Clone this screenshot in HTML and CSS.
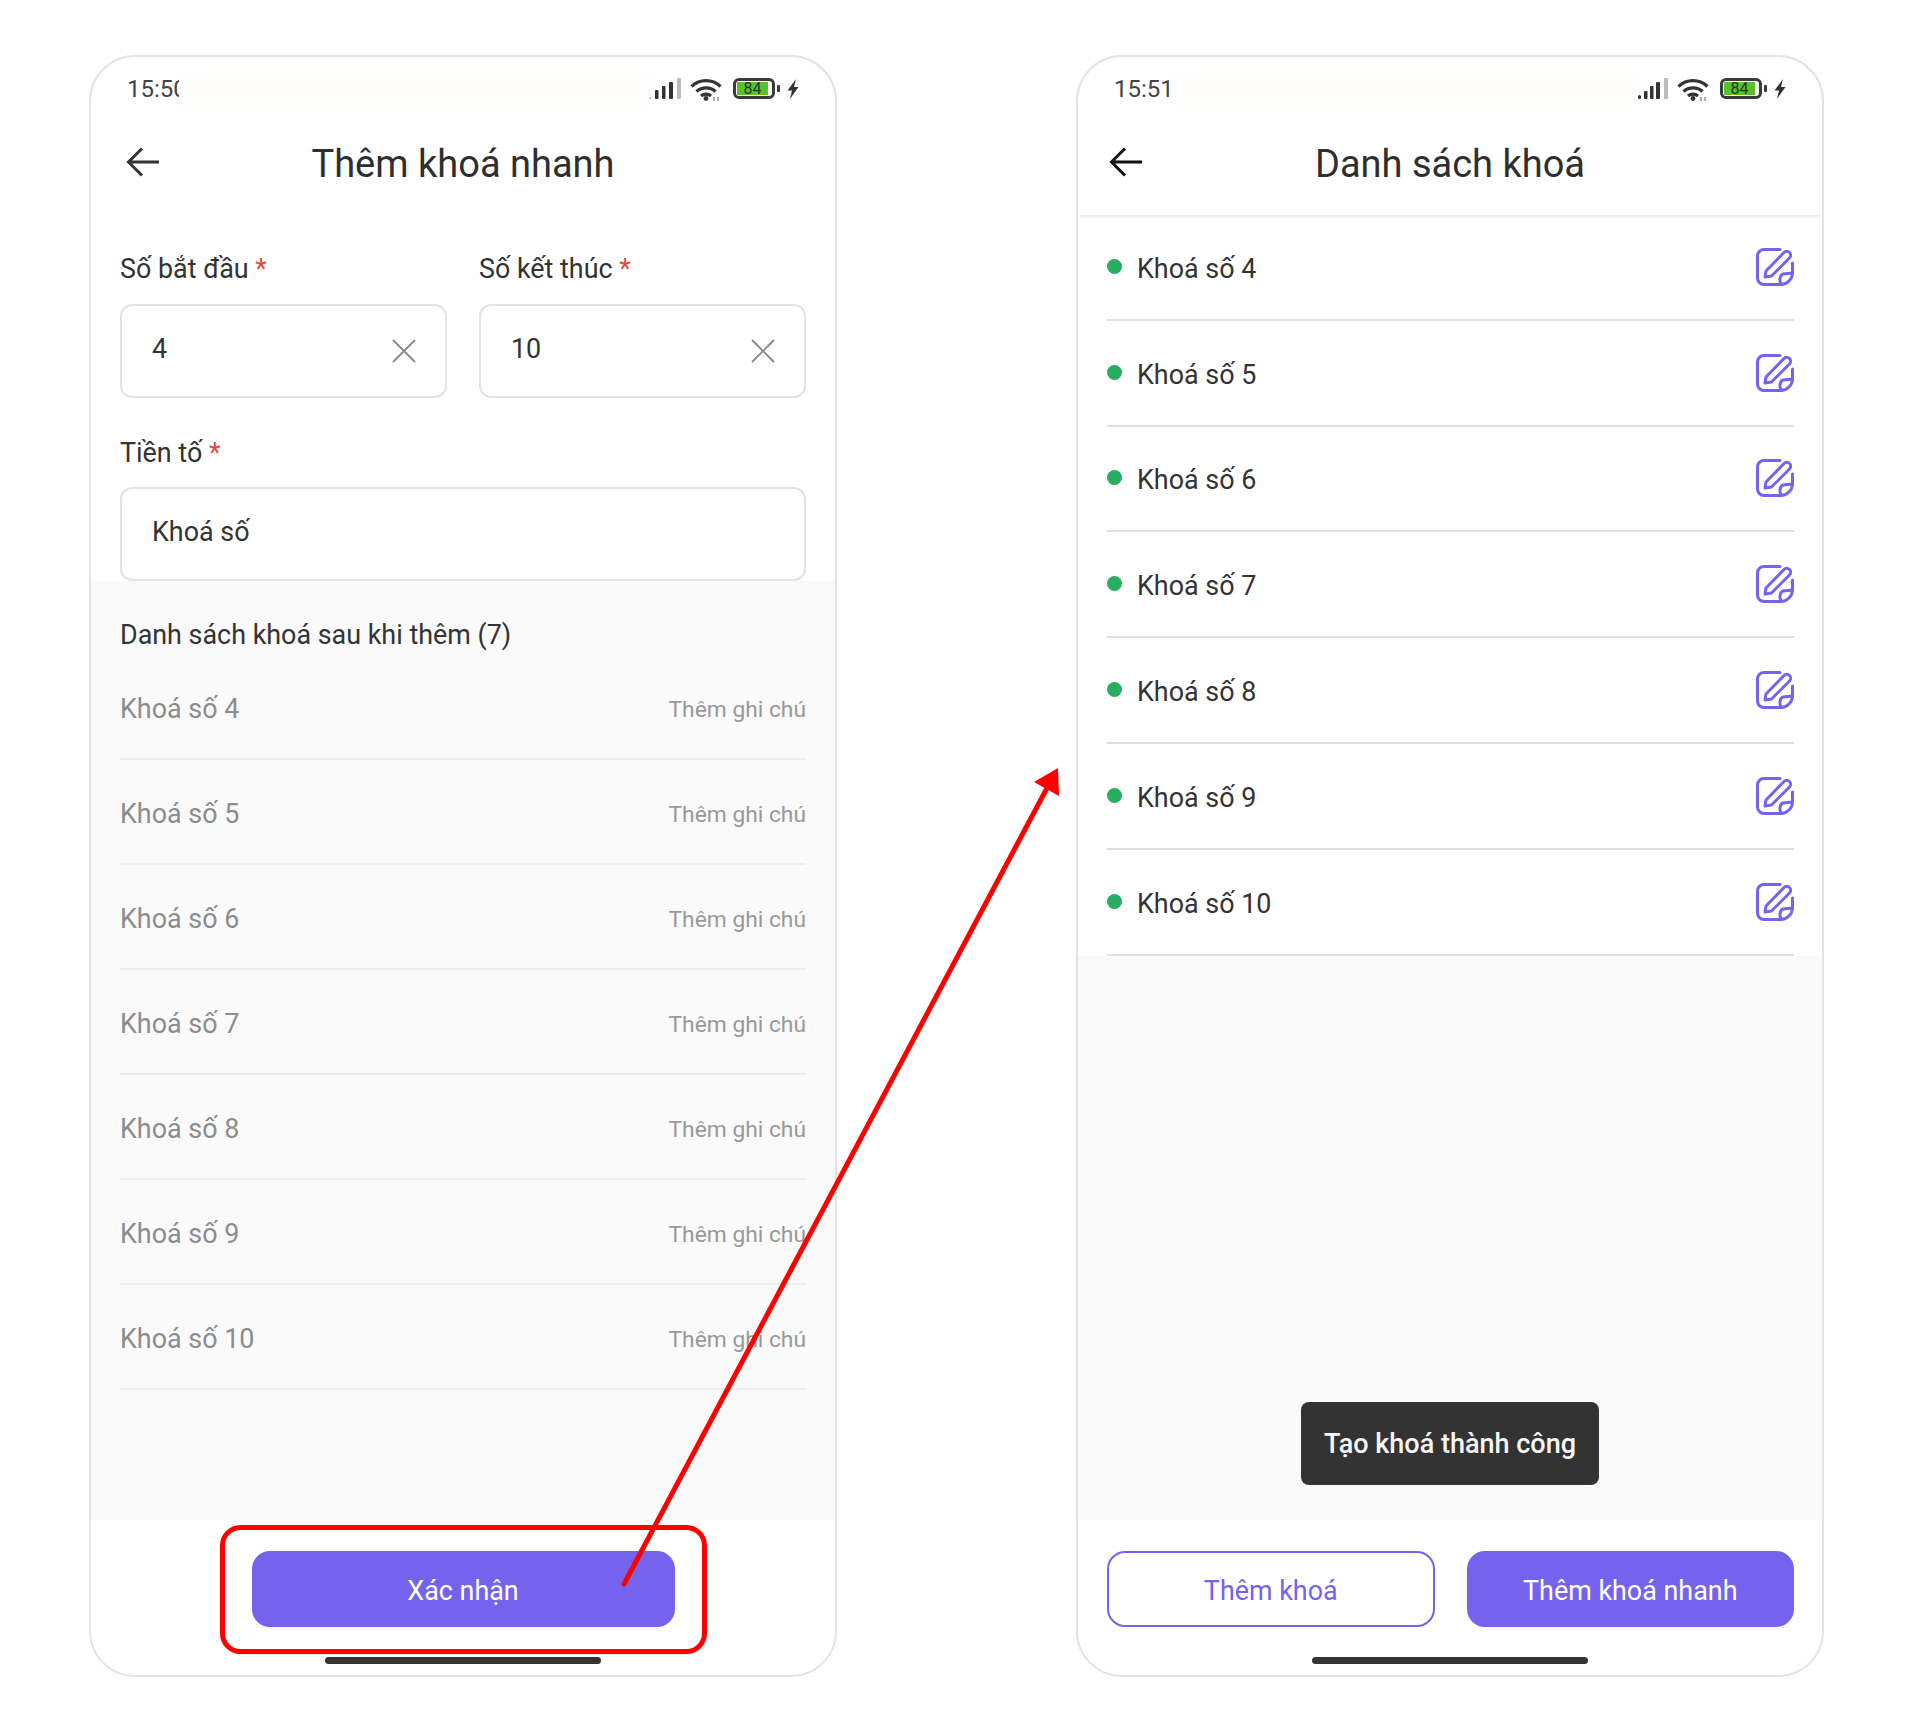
FILE: index.html
```html
<!DOCTYPE html>
<html lang="vi">
<head>
<meta charset="utf-8">
<title>Thêm khoá nhanh</title>
<link rel="stylesheet" href="styles.css">
</head>
<body>
<main class="page">
  <section class="phone">
    <div class="status">
      <span class="time">15:50</span>
      <span class="status-mask status-mask-a"></span>
      <div class="status-icons">
        <svg class="signal" viewBox="0 0 32 21"><rect x="0" y="19.5" width="2" height="1.5" fill="#bbb"/><rect x="6" y="12" width="3.5" height="9" rx="1" fill="#333"/><rect x="13" y="8" width="3.5" height="13" rx="1" fill="#333"/><rect x="20" y="4" width="4" height="17" rx="1" fill="#333"/><rect x="28" y="0" width="4" height="21" rx="1" fill="#bbb"/></svg>
        <svg class="wifi" viewBox="0 0 32 24" fill="none" stroke="#333" stroke-width="3.2"><path d="M1.5 9.5A21 21 0 0 1 30.5 9.5"/><path d="M6.5 14.5A14 14 0 0 1 25.5 14.5"/><path d="M11 19A7.5 7.5 0 0 1 21 19"/><circle cx="16" cy="21.5" r="2.4" fill="#333" stroke="none"/><path d="M24 20v4M28 20v4" stroke="#999" stroke-width="1.6"/></svg>
        <div class="battery"><span class="battery-level">84</span></div>
        <span class="battery-nub"></span>
        <svg class="bolt" viewBox="0 0 12 20"><path d="M9 0 0.5 11.5H5L3 20 11.5 8H7Z" fill="#333"/></svg>
      </div>
    </div>
    <header class="topbar">
      <svg class="back" viewBox="0 0 33 30" fill="none" stroke="#333" stroke-width="3"><path d="M33 15H3M16 1.5 2.5 15 16 28.5"/></svg>
      <h1 class="title">Thêm khoá nhanh</h1>
    </header>
    <form class="form">
      <div class="form-row">
        <div class="field">
          <div class="label">Số bắt đầu <span class="star">*</span></div>
          <div class="input"><span class="value">4</span><svg class="clear" viewBox="0 0 24 24" fill="none" stroke="#888" stroke-width="1.8"><path d="M1 1 23 23M23 1 1 23"/></svg></div>
        </div>
        <div class="field">
          <div class="label">Số kết thúc <span class="star">*</span></div>
          <div class="input"><span class="value">10</span><svg class="clear" viewBox="0 0 24 24" fill="none" stroke="#888" stroke-width="1.8"><path d="M1 1 23 23M23 1 1 23"/></svg></div>
        </div>
      </div>
      <div class="field field-wide">
        <div class="label">Tiền tố <span class="star">*</span></div>
        <div class="input"><span class="value">Khoá số</span></div>
      </div>
    </form>
    <div class="preview">
      <div class="preview-heading">Danh sách khoá sau khi thêm (7)</div>
      <div class="preview-row"><span>Khoá số 4</span><span class="note">Thêm ghi chú</span></div>
      <div class="preview-row"><span>Khoá số 5</span><span class="note">Thêm ghi chú</span></div>
      <div class="preview-row"><span>Khoá số 6</span><span class="note">Thêm ghi chú</span></div>
      <div class="preview-row"><span>Khoá số 7</span><span class="note">Thêm ghi chú</span></div>
      <div class="preview-row"><span>Khoá số 8</span><span class="note">Thêm ghi chú</span></div>
      <div class="preview-row"><span>Khoá số 9</span><span class="note">Thêm ghi chú</span></div>
      <div class="preview-row"><span>Khoá số 10</span><span class="note">Thêm ghi chú</span></div>
    </div>
    <footer class="footer">
      <div class="actions actions-center"><button type="button" class="btn btn-solid btn-confirm">Xác nhận</button></div>
      <div class="home-bar"></div>
    </footer>
  </section>

  <section class="phone">
    <div class="status">
      <span class="time">15:51</span>
      <span class="status-mask status-mask-b"></span>
      <div class="status-icons">
        <svg class="signal" viewBox="0 0 32 21"><rect x="2" y="17" width="3" height="4" rx="1.5" fill="#333"/><rect x="8" y="13" width="3.5" height="8" rx="1" fill="#333"/><rect x="14" y="8" width="3.5" height="13" rx="1" fill="#333"/><rect x="20" y="4" width="4" height="17" rx="1" fill="#333"/><rect x="28" y="0" width="4" height="21" rx="1" fill="#bbb"/></svg>
        <svg class="wifi" viewBox="0 0 32 24" fill="none" stroke="#333" stroke-width="3.2"><path d="M1.5 9.5A21 21 0 0 1 30.5 9.5"/><path d="M6.5 14.5A14 14 0 0 1 25.5 14.5"/><path d="M11 19A7.5 7.5 0 0 1 21 19"/><circle cx="16" cy="21.5" r="2.4" fill="#333" stroke="none"/><path d="M24 20v4M28 20v4" stroke="#999" stroke-width="1.6"/></svg>
        <div class="battery"><span class="battery-level">84</span></div>
        <span class="battery-nub"></span>
        <svg class="bolt" viewBox="0 0 12 20"><path d="M9 0 0.5 11.5H5L3 20 11.5 8H7Z" fill="#333"/></svg>
      </div>
    </div>
    <header class="topbar topbar-raised">
      <svg class="back back-dark" viewBox="0 0 33 30" fill="none" stroke="#111" stroke-width="3"><path d="M33 15H3M16 1.5 2.5 15 16 28.5"/></svg>
      <h1 class="title">Danh sách khoá</h1>
    </header>
    <div class="lock-area">
      <ul class="locks">
        <li class="lock"><span class="dot"></span><span class="lock-name">Khoá số 4</span><svg class="edit" viewBox="0 0 38 38" fill="none" stroke="#7563ee" stroke-width="3" stroke-linejoin="round" stroke-linecap="round"><path d="M24 1.5H8A6.5 6.5 0 0 0 1.5 8V30A6.5 6.5 0 0 0 8 36.5H25"/><path d="M36.5 15V25C36.5 31 31 36.5 25 36.5C23 32 24 27 27 26L36.5 25"/><path d="M10 23 28 4.5A3.6 3.6 0 0 1 33.5 10L15.5 28 9 29Z"/></svg></li>
        <li class="lock"><span class="dot"></span><span class="lock-name">Khoá số 5</span><svg class="edit" viewBox="0 0 38 38" fill="none" stroke="#7563ee" stroke-width="3" stroke-linejoin="round" stroke-linecap="round"><path d="M24 1.5H8A6.5 6.5 0 0 0 1.5 8V30A6.5 6.5 0 0 0 8 36.5H25"/><path d="M36.5 15V25C36.5 31 31 36.5 25 36.5C23 32 24 27 27 26L36.5 25"/><path d="M10 23 28 4.5A3.6 3.6 0 0 1 33.5 10L15.5 28 9 29Z"/></svg></li>
        <li class="lock"><span class="dot"></span><span class="lock-name">Khoá số 6</span><svg class="edit" viewBox="0 0 38 38" fill="none" stroke="#7563ee" stroke-width="3" stroke-linejoin="round" stroke-linecap="round"><path d="M24 1.5H8A6.5 6.5 0 0 0 1.5 8V30A6.5 6.5 0 0 0 8 36.5H25"/><path d="M36.5 15V25C36.5 31 31 36.5 25 36.5C23 32 24 27 27 26L36.5 25"/><path d="M10 23 28 4.5A3.6 3.6 0 0 1 33.5 10L15.5 28 9 29Z"/></svg></li>
        <li class="lock"><span class="dot"></span><span class="lock-name">Khoá số 7</span><svg class="edit" viewBox="0 0 38 38" fill="none" stroke="#7563ee" stroke-width="3" stroke-linejoin="round" stroke-linecap="round"><path d="M24 1.5H8A6.5 6.5 0 0 0 1.5 8V30A6.5 6.5 0 0 0 8 36.5H25"/><path d="M36.5 15V25C36.5 31 31 36.5 25 36.5C23 32 24 27 27 26L36.5 25"/><path d="M10 23 28 4.5A3.6 3.6 0 0 1 33.5 10L15.5 28 9 29Z"/></svg></li>
        <li class="lock"><span class="dot"></span><span class="lock-name">Khoá số 8</span><svg class="edit" viewBox="0 0 38 38" fill="none" stroke="#7563ee" stroke-width="3" stroke-linejoin="round" stroke-linecap="round"><path d="M24 1.5H8A6.5 6.5 0 0 0 1.5 8V30A6.5 6.5 0 0 0 8 36.5H25"/><path d="M36.5 15V25C36.5 31 31 36.5 25 36.5C23 32 24 27 27 26L36.5 25"/><path d="M10 23 28 4.5A3.6 3.6 0 0 1 33.5 10L15.5 28 9 29Z"/></svg></li>
        <li class="lock"><span class="dot"></span><span class="lock-name">Khoá số 9</span><svg class="edit" viewBox="0 0 38 38" fill="none" stroke="#7563ee" stroke-width="3" stroke-linejoin="round" stroke-linecap="round"><path d="M24 1.5H8A6.5 6.5 0 0 0 1.5 8V30A6.5 6.5 0 0 0 8 36.5H25"/><path d="M36.5 15V25C36.5 31 31 36.5 25 36.5C23 32 24 27 27 26L36.5 25"/><path d="M10 23 28 4.5A3.6 3.6 0 0 1 33.5 10L15.5 28 9 29Z"/></svg></li>
        <li class="lock"><span class="dot"></span><span class="lock-name">Khoá số 10</span><svg class="edit" viewBox="0 0 38 38" fill="none" stroke="#7563ee" stroke-width="3" stroke-linejoin="round" stroke-linecap="round"><path d="M24 1.5H8A6.5 6.5 0 0 0 1.5 8V30A6.5 6.5 0 0 0 8 36.5H25"/><path d="M36.5 15V25C36.5 31 31 36.5 25 36.5C23 32 24 27 27 26L36.5 25"/><path d="M10 23 28 4.5A3.6 3.6 0 0 1 33.5 10L15.5 28 9 29Z"/></svg></li>
      </ul>
      <div class="toast">Tạo khoá thành công</div>
    </div>
    <footer class="footer">
      <div class="actions actions-split"><button type="button" class="btn btn-outline">Thêm khoá</button><button type="button" class="btn btn-solid">Thêm khoá nhanh</button></div>
      <div class="home-bar"></div>
    </footer>
  </section>

  <svg class="annotation" viewBox="0 0 1920 1709" aria-hidden="true">
    <rect x="222.5" y="1527.5" width="482" height="124" rx="18" fill="none" stroke="#ff0000" stroke-width="5"/>
    <path d="M624 1584 1046 790" stroke="#ff0000" stroke-width="5" stroke-linecap="round"/>
    <path d="M1058 768 1034 782 1059 796Z" fill="#ff0000"/>
  </svg>
</main>
</body>
</html>
```

FILE: styles.css
```css
* { box-sizing: border-box; }
html, body { margin: 0; padding: 0; background: #fff; }
body { font-family: Roboto, "Noto Sans", sans-serif; color: #333; }

.page {
  position: relative;
  width: 1920px;
  height: 1709px;
  padding: 55px 0 0 89px;
  display: flex;
  gap: 239px;
  align-items: flex-start;
  overflow: hidden;
}

.phone {
  width: 748px;
  height: 1622px;
  border: 2px solid #e3e3e3;
  border-radius: 46px;
  overflow: hidden;
  display: flex;
  flex-direction: column;
  background: #fff;
}

/* status bar */
.status {
  position: relative;
  height: 63px;
  flex: none;
  display: flex;
  align-items: center;
  justify-content: space-between;
  padding: 0 36px;
}
.time { font-size: 24px; color: #444; padding-top: 1px; }
.status-mask {
  position: absolute;
  top: 16px;
  height: 33px;
  background: #fffefc;
}
.status-mask-a { left: 88px; width: 471px; }
.status-mask-b { left: 95px; width: 462px; }
.status-icons { position: relative; display: flex; align-items: center; }
.signal { width: 32px; height: 21px; margin-right: 9px; }
.wifi { width: 32px; height: 24px; margin-right: 11px; }
.battery {
  width: 42px;
  height: 21px;
  border: 3px solid #3a3a3a;
  border-radius: 6px;
  padding: 1px 4px 1px 1px;
  display: flex;
}
.battery-level {
  flex: 1;
  background: #57c22a;
  color: #1c3d10;
  font-size: 16px;
  line-height: 14px;
  text-align: center;
}
.battery-nub { width: 3px; height: 7px; margin: 0 7px 0 2px; background: #3a3a3a; border-radius: 1px; }
.bolt { width: 12px; height: 20px; }

/* top bar */
.topbar {
  position: relative;
  z-index: 1;
  height: 86px;
  flex: none;
  display: flex;
  align-items: center;
  justify-content: center;
  background: #fff;
}
.topbar-raised { height: 95px; padding-bottom: 9px; box-shadow: 0 3px 3px -2px rgba(0, 0, 0, .14); }
.back { position: absolute; left: 35px; top: 27px; width: 33px; height: 30px; }
.back-dark { left: 31px; }
.title { margin: 0; padding-top: 2px; font-size: 38px; font-weight: 400; color: #2e2e2e; }

/* form */
.form { flex: none; padding: 42px 29px 0; }
.form-row { display: flex; gap: 32px; }
.field { flex: 1; }
.field-wide { margin-top: 34px; }
.label { font-size: 26.9px; line-height: 40px; padding-top: 1px; margin-bottom: 15px; color: #333; }
.field-wide .label { margin-bottom: 14px; }
.star { color: #e5483c; }
.input {
  height: 94px;
  border: 2px solid #e3e3e3;
  border-radius: 12px;
  padding: 0 29px 5px 30px;
  display: flex;
  align-items: center;
  justify-content: space-between;
  font-size: 26.9px;
}
.clear { width: 24px; height: 24px; margin: 5px 0 0; }

/* preview list */
.preview { flex: 1; background: #fafafa; padding: 34px 29px 0; }
.preview-heading { font-size: 26.9px; line-height: 40px; color: #333; }
.preview-row {
  height: 105px;
  padding-top: 34px;
  display: flex;
  justify-content: space-between;
  border-bottom: 2px solid #eeeeee;
  font-size: 26.9px;
  line-height: 40px;
  color: #8c8c8c;
}
.note { font-size: 22.8px; color: #999; padding-top: 1px; }

/* lock list */
.lock-area { position: relative; flex: 1; background: #fafafa; }
.locks { list-style: none; margin: 0; padding: 0 28px 0 29px; background: #fff; }
.lock {
  height: 105.8px;
  padding-top: 4px;
  display: flex;
  align-items: center;
  border-bottom: 2px solid #e0e0e0;
  font-size: 26.9px;
}
.dot { width: 15px; height: 15px; border-radius: 50%; background: #27ae60; margin: -5px 15px 0 0; }
.lock-name { flex: 1; }
.edit { width: 38px; height: 38px; margin: -4px 0 0; }
.toast {
  position: absolute;
  left: 223px;
  top: 1187px;
  width: 298px;
  height: 83px;
  border-radius: 8px;
  background: #333;
  color: #f7f7f7;
  font-size: 27px;
  font-weight: 500;
  display: flex;
  align-items: center;
  justify-content: center;
}

/* footer */
.footer { height: 155px; flex: none; padding: 31px 29px 0; background: #fff; }
.actions { display: flex; gap: 32px; }
.actions-center { justify-content: center; }
.actions-split { margin-right: -1px; }
.btn {
  flex: 1;
  height: 76px;
  border-radius: 18px;
  font: 400 26.9px Roboto, sans-serif;
  padding: 3px 0 0;
  border: 2px solid #7563ee;
}
.btn-solid { background: #7563ee; color: #fff; }
.btn-outline { background: #fff; color: #7563ee; }
.btn-confirm { flex: none; width: 423px; }
.home-bar { width: 276px; height: 7px; margin: 30px auto 0; border-radius: 4px; background: #333; }

/* annotation */
.annotation { position: absolute; left: 0; top: 0; width: 1920px; height: 1709px; pointer-events: none; }
```
